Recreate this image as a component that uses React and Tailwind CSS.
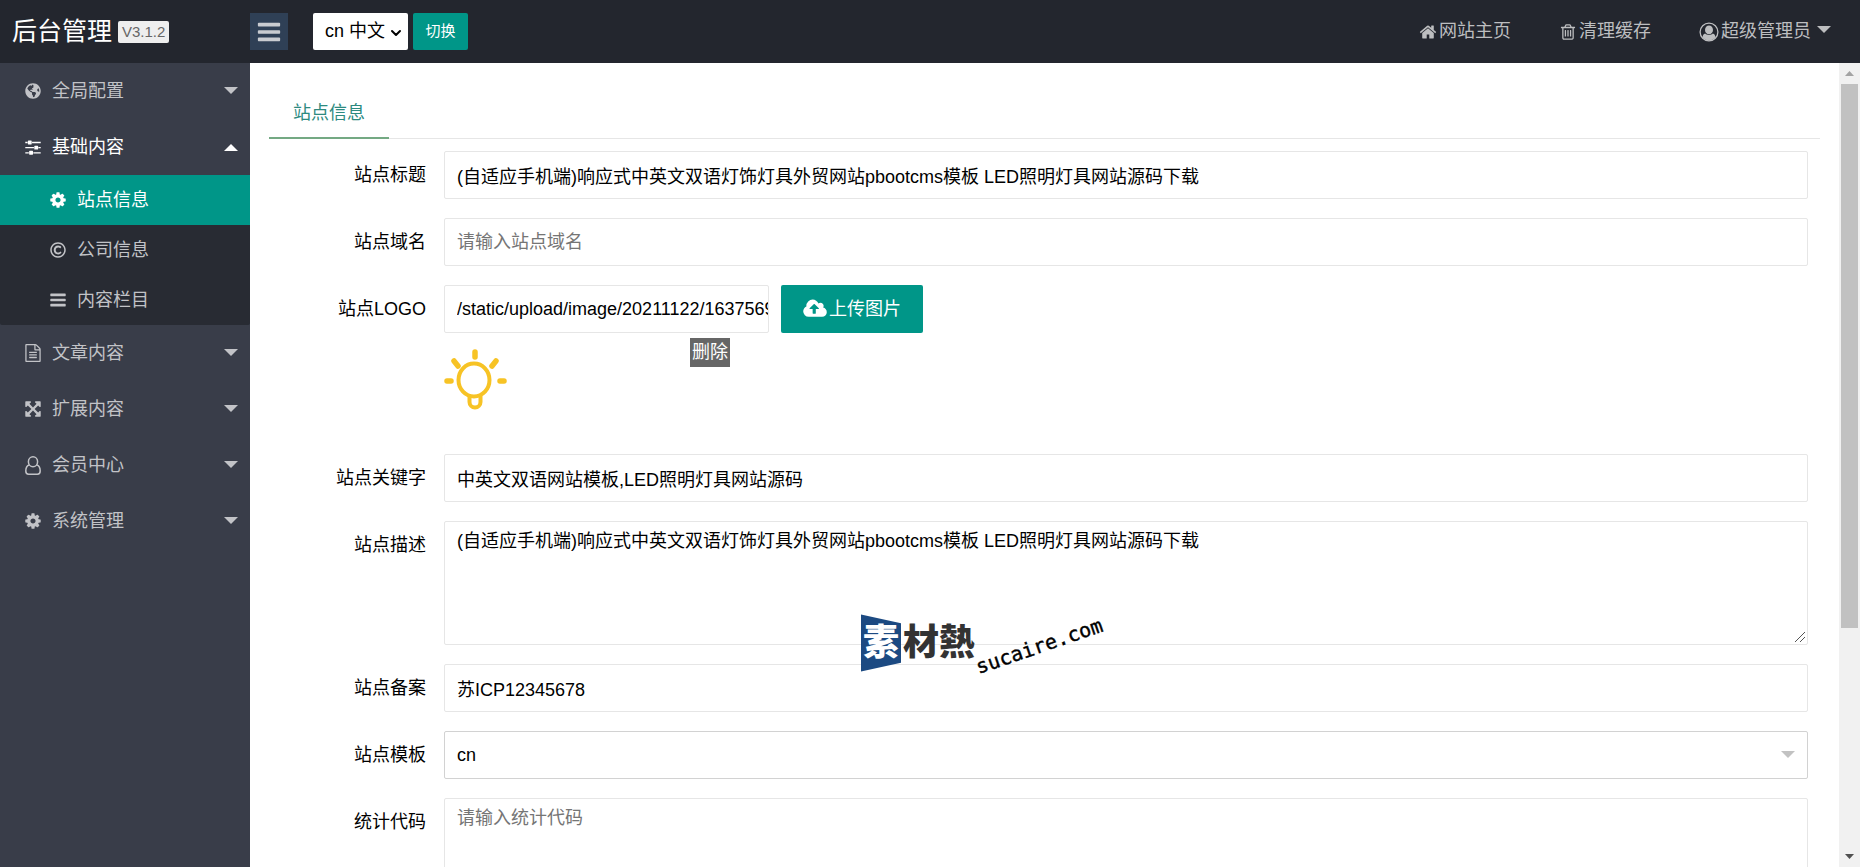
import React, { useState } from 'react';
import { FaGlobeAmericas, FaRegCopyright } from 'react-icons/fa';
import { ChevronDown } from 'lucide-react';

const paths = {
  home: 'M1472 992v480q0 26-19 45t-45 19h-384v-384h-256v384h-384q-26 0-45-19t-19-45v-480q0-1 .5-3t.5-3l575-474 575 474q1 2 1 6zm223-69l-62 74q-8 9-21 11h-3q-13 0-21-7l-692-577-692 577q-12 8-24 7-13-2-21-11l-62-74q-8-10-7-23.5t11-21.5l719-599q32-26 76-26t76 26l244 204v-195q0-14 9-23t23-9h192q14 0 23 9t9 23v408l219 182q10 8 11 21.5t-7 23.5z',
  trash: 'M704 736v576q0 14-9 23t-23 9h-64q-14 0-23-9t-9-23v-576q0-14 9-23t23-9h64q14 0 23 9t9 23zm256 0v576q0 14-9 23t-23 9h-64q-14 0-23-9t-9-23v-576q0-14 9-23t23-9h64q14 0 23 9t9 23zm256 0v576q0 14-9 23t-23 9h-64q-14 0-23-9t-9-23v-576q0-14 9-23t23-9h64q14 0 23 9t9 23zm128 724v-948h-896v948q0 22 7 40.5t14.5 27 10.5 8.5h832q3 0 10.5-8.5t14.5-27 7-40.5zm-672-1076h448l-48-117q-7-9-17-11h-317q-10 2-17 11zm928 32v64q0 14-9 23t-23 9h-96v948q0 83-47 143.5t-113 60.5h-832q-66 0-113-58.5t-47-141.5v-952h-96q-14 0-23-9t-9-23v-64q0-14 9-23t23-9h309l70-167q15-37 54-63t79-26h320q40 0 79 26t54 63l70 167h309q14 0 23 9t9 23z',
  gear: 'M1152 896q0-106-75-181t-181-75-181 75-75 181 75 181 181 75 181-75 75-181zm512-109v222q0 12-8 23t-20 13l-185 28q-19 54-39 91 35 50 107 138 10 12 10 25t-9 23q-27 37-99 108t-94 71q-12 0-26-9l-138-108q-44 23-91 38-16 136-29 186-7 28-36 28h-222q-14 0-24.5-8.5t-11.5-21.5l-28-184q-49-16-90-37l-141 107q-10 9-25 9-14 0-25-11-126-114-165-168-7-10-7-23 0-12 8-23 15-21 51-66.5t54-70.5q-27-50-41-99l-183-27q-13-2-21-12.5t-8-23.5v-222q0-12 8-23t19-13l186-28q14-46 39-92-40-57-107-138-10-12-10-24 0-10 9-23 26-36 98.5-107.5t94.5-71.5q13 0 26 10l138 107q44-23 91-38 16-136 29-186 7-28 36-28h222q14 0 24.5 8.5t11.5 21.5l28 184q49 16 90 37l142-107q9-9 24-9 13 0 25 10 129 119 165 170 7 8 7 22 0 12-8 23-15 21-51 66.5t-54 70.5q26 50 41 98l183 28q13 2 21 12.5t8 23.5z',
  bars: 'M1664 1344v128q0 26-19 45t-45 19h-1408q-26 0-45-19t-19-45v-128q0-26 19-45t45-19h1408q26 0 45 19t19 45zm0-512v128q0 26-19 45t-45 19h-1408q-26 0-45-19t-19-45v-128q0-26 19-45t45-19h1408q26 0 45 19t19 45zm0-512v128q0 26-19 45t-45 19h-1408q-26 0-45-19t-19-45v-128q0-26 19-45t45-19h1408q26 0 45 19t19 45z',
  sliders: 'M480 1408v128h-352v-128h352zm352-128q26 0 45 19t19 45v256q0 26-19 45t-45 19h-256q-26 0-45-19t-19-45v-256q0-26 19-45t45-19h256zm160-384v128h-864v-128h864zm-640-512v128h-224v-128h224zm1312 1024v128h-736v-128h736zm-960-1152q26 0 45 19t19 45v256q0 26-19 45t-45 19h-256q-26 0-45-19t-19-45v-256q0-26 19-45t45-19h256zm640 512q26 0 45 19t19 45v256q0 26-19 45t-45 19h-256q-26 0-45-19t-19-45v-256q0-26 19-45t45-19h256zm320 128v128h-224v-128h224zm0-512v128h-864v-128h864z',
  arrows: 'M1411 541l-355 355 355 355 144-144q29-31 70-14 39 17 39 59v448q0 26-19 45t-45 19h-448q-42 0-59-40-17-39 14-69l144-144-355-355-355 355 144 144q31 30 14 69-17 40-59 40h-448q-26 0-45-19t-19-45v-448q0-42 40-59 39-17 69 14l144 144 355-355-355-355-144 144q-19 19-45 19-12 0-24-5-40-17-40-59v-448q0-26 19-45t45-19h448q42 0 59 40 17 39-14 69l-144 144 355 355 355-355-144-144q-31-30-14-69 17-40 59-40h448q26 0 45 19t19 45v448q0 42-39 59-13 5-25 5-26 0-45-19z',
  file: 'M1596 380q28 28 48 76t20 88v1152q0 40-28 68t-68 28h-1344q-40 0-68-28t-28-68v-1600q0-40 28-68t68-28h896q40 0 88 20t76 48zm-444-244v376h376q-10-29-22-41l-313-313q-12-12-41-22zm384 1528v-1024h-416q-40 0-68-28t-28-68v-416h-768v1536h1280zm-1024-864q0-14 9-23t23-9h704q14 0 23 9t9 23v64q0 14-9 23t-23 9h-704q-14 0-23-9t-9-23v-64zm736 224q14 0 23 9t9 23v64q0 14-9 23t-23 9h-704q-14 0-23-9t-9-23v-64q0-14 9-23t23-9h704zm0 256q14 0 23 9t9 23v64q0 14-9 23t-23 9h-704q-14 0-23-9t-9-23v-64q0-14 9-23t23-9h704z',
  upload: 'M1216 864q0-14-9-23l-352-352q-9-9-23-9t-23 9l-351 351q-10 12-10 24 0 14 9 23t23 9h224v352q0 13 9.5 22.5t22.5 9.5h192q13 0 22.5-9.5t9.5-22.5v-352h224q13 0 22.5-9.5t9.5-22.5zm640 288q0 159-112.5 271.5t-271.5 112.5h-1088q-185 0-316.5-131.5t-131.5-316.5q0-130 70-240t188-165q-2-30-2-43 0-212 150-362t362-150q156 0 285.5 87t188.5 231q71-62 166-62 106 0 181 75t75 181q0 76-41 138 130 31 213.5 135.5t83.5 238.5z',
};

const Icon = ({ name, className, viewBox = '0 0 1792 1792' }) => (
  <svg viewBox={viewBox} fill="currentColor" className={className} aria-hidden="true"><path d={paths[name]} /></svg>
);

const UserIcon = () => (
  <svg viewBox="0 0 16 19" className="w-4 h-[19px]" fill="none" stroke="currentColor" strokeWidth="1.5" aria-hidden="true">
    <ellipse cx="8" cy="5.8" rx="4.6" ry="5" />
    <path d="M4.2 9C1.8 9.6.8 12 .8 15c0 2 1.2 3.2 2.8 3.2h8.8c1.6 0 2.8-1.2 2.8-3.2 0-3-1-5.4-3.4-6" />
  </svg>
);

const UserCircle = () => (
  <svg viewBox="0 0 20 20" className="w-5 h-5" aria-hidden="true">
    <circle cx="10" cy="10" r="8.9" fill="none" stroke="currentColor" strokeWidth="1.3" />
    <path d="M6.2 11.6C4.4 12 3.8 13.6 3.5 15.3a8.3 8.3 0 0 0 13 0C16.2 13.6 15.6 12 13.8 11.6 12.8 12.6 11.5 13 10 13s-2.8-.4-3.8-1.4z" fill="currentColor" />
    <ellipse cx="10" cy="7.9" rx="4" ry="4.3" fill="currentColor" />
  </svg>
);

const Caret = ({ up, className = '' }) => (
  <svg viewBox="0 0 14 7" className={`w-[14px] h-[7px] ${className}`} fill="currentColor" aria-hidden="true">
    <path d={up ? 'M0 7L7 0l7 7z' : 'M0 0h14L7 7z'} />
  </svg>
);

const menus = [
  { label: '全局配置', icon: <FaGlobeAmericas className="w-4 h-4" /> },
  {
    label: '基础内容',
    icon: <Icon name="sliders" className="w-[18px] h-[18px]" />,
    children: [
      { label: '站点信息', icon: <Icon name="gear" className="w-[18px] h-[18px]" /> },
      { label: '公司信息', icon: <FaRegCopyright className="w-4 h-4" /> },
      { label: '内容栏目', icon: <Icon name="bars" className="w-[18px] h-[18px]" /> },
    ],
  },
  { label: '文章内容', icon: <Icon name="file" className="w-[18px] h-[18px]" /> },
  { label: '扩展内容', icon: <Icon name="arrows" className="w-[18px] h-[18px]" /> },
  { label: '会员中心', icon: <UserIcon /> },
  { label: '系统管理', icon: <Icon name="gear" className="w-[18px] h-[18px]" /> },
];

const inputClass = 'block w-full h-12 pl-3 border border-[#e6e6e6] rounded-xs bg-white placeholder:text-[#757575] focus:outline-none';
const areaClass = 'block w-full h-[124px] pl-3 pt-[7px] leading-6 border border-[#e6e6e6] rounded-xs bg-white placeholder:text-[#757575] focus:outline-none resize-y [&::-webkit-resizer]:hidden';

const Row = ({ id, label, children }) => (
  <div className="flex">
    <label htmlFor={id} className="w-[175px] shrink-0 pr-[18px] text-right leading-[48px]">{label}</label>
    <div className="flex-1 min-w-0">{children}</div>
  </div>
);

const TextArea = (props) => (
  <div className="relative">
    <textarea className={areaClass} {...props} />
    <svg viewBox="0 0 10 10" className="absolute right-[3px] bottom-[3px] w-[10px] h-[10px] pointer-events-none" stroke="#555" fill="none" aria-hidden="true">
      <path d="M0 10L10 0M5 10l5-5" />
    </svg>
  </div>
);

const Header = ({ onToggle }) => (
  <header className="h-[63px] shrink-0 flex items-center bg-[#23262e] text-[#bdbec0]">
    <div className="w-[250px] pl-3 flex items-center gap-[6px]">
      <h1 className="text-[25px] text-white whitespace-nowrap">后台管理</h1>
      <span className="px-1 h-[22px] leading-[22px] rounded-xs bg-[#eee] text-[#666] text-[15px]">V3.1.2</span>
    </div>
    <button type="button" onClick={onToggle} aria-label="菜单" className="w-[38px] h-[37px] flex items-center justify-center bg-[#2f4056] text-[#c9ccd1]">
      <Icon name="bars" className="w-[26px] h-[26px]" />
    </button>
    <div className="relative ml-[25px]">
      <select aria-label="语言" className="appearance-none block w-[95px] h-[37px] pl-3 rounded-xs bg-white text-black">
        <option>cn 中文</option>
      </select>
      <ChevronDown className="absolute right-1 top-3 w-4 h-4 text-black pointer-events-none" strokeWidth={3} />
    </div>
    <button type="button" className="ml-[5px] w-[55px] h-[37px] rounded-xs bg-[#009688] text-white text-[15px]">切换</button>

    <nav className="ml-auto pr-[29px] flex items-center gap-12">
      <a href="#home" className="flex items-center gap-[2px]"><Icon name="home" className="w-[18px] h-[18px]" />网站主页</a>
      <a href="#cache" className="flex items-center gap-[2px]"><Icon name="trash" className="w-[18px] h-[18px]" />清理缓存</a>
      <a href="#user" className="flex items-center gap-[2px]"><UserCircle />超级管理员<Caret className="ml-1 mb-1" /></a>
    </nav>
  </header>
);

const Sidebar = () => {
  const [openMenu, setOpenMenu] = useState('基础内容');
  const [current, setCurrent] = useState('站点信息');

  return (
    <aside className="w-[250px] shrink-0 bg-[#393d49] text-[#c2c3c7]">
      {menus.map(menu => {
        const open = openMenu === menu.label;
        return (
          <div key={menu.label}>
            <button type="button" onClick={() => setOpenMenu(open ? '' : menu.label)} className={`w-full h-14 pl-6 pr-3 flex items-center ${open ? 'text-white' : ''}`}>
              <span className="w-[18px] flex justify-center">{menu.icon}</span>
              <span className="ml-[10px]">{menu.label}</span>
              <Caret up={open} className={`ml-auto ${open ? '' : 'mb-[2px]'}`} />
            </button>
            {open && menu.children && (
              <div className="bg-[#282b33] rounded-xs">
                {menu.children.map(item => (
                  <a key={item.label} href="#menu" onClick={() => setCurrent(item.label)} className={`h-[50px] pl-[49px] flex items-center ${current === item.label ? 'bg-[#009688] text-white' : ''}`}>
                    <span className="w-[18px] flex justify-center">{item.icon}</span>
                    <span className="ml-[10px]">{item.label}</span>
                  </a>
                ))}
              </div>
            )}
          </div>
        );
      })}
    </aside>
  );
};

const Bulb = () => (
  <svg viewBox="0 0 63 61" className="w-[63px] h-[61px]" fill="none" stroke="#f7c325" strokeLinecap="round" aria-label="LOGO">
    <ellipse cx="30" cy="31" rx="15.5" ry="16.5" strokeWidth="4" />
    <path d="M25.5 47v6a5.5 5.5 0 0 0 11 0v-6" strokeWidth="4" />
    <path d="M31 3v5M3 32h4M56 32h4M10 12l4 5M52 12l-4 5" strokeWidth="5.5" />
  </svg>
);

const Watermark = () => (
  <div className="absolute left-[861px] top-[612px] flex pointer-events-none font-black text-[36px] leading-[62px] text-[#333]" aria-hidden="true">
    <span className="w-10 text-center text-white bg-[#1c4a82] [clip-path:polygon(0_4%,100%_18%,100%_82%,0_96%)]">素</span>
    <span className="ml-[2px]">材熱</span>
    <span className="w-[132px] h-6 -ml-[2px] mt-[22px] -rotate-19 font-['DejaVu_Sans_Mono',monospace] font-normal text-[20px] leading-6 text-black [-webkit-text-stroke:0.4px_black]">sucaire.com</span>
  </div>
);

const App = () => {
  const [collapsed, setCollapsed] = useState(false);

  return (
    <div className="relative h-screen flex flex-col overflow-hidden bg-white text-black text-[18px] font-normal font-['Liberation_Sans','Noto_Sans_CJK_SC',sans-serif]">
      <Header onToggle={() => setCollapsed(!collapsed)} />
      <div className="flex-1 min-h-0 flex">
        {!collapsed && <Sidebar />}
        <main className="flex-1 min-w-0 overflow-hidden pt-6 px-[19px]">
          <div className="h-[52px] flex border-b border-[#e6e6e6]">
            <a href="#site" className="h-[52px] px-6 leading-[52px] border-b-2 border-[#74a983] text-[#2d8a80]">站点信息</a>
          </div>

          <form className="mt-3 pr-3 flex flex-col gap-[19px]" onSubmit={e => e.preventDefault()}>
            <Row id="title" label="站点标题">
              <input id="title" type="text" className={inputClass} defaultValue="(自适应手机端)响应式中英文双语灯饰灯具外贸网站pbootcms模板 LED照明灯具网站源码下载" />
            </Row>
            <Row id="domain" label="站点域名">
              <input id="domain" type="text" className={inputClass} placeholder="请输入站点域名" />
            </Row>
            <Row id="logo" label="站点LOGO">
              <div className="flex gap-3">
                <div className="w-[325px]">
                  <input id="logo" type="text" className={inputClass} defaultValue="/static/upload/image/20211122/1637569350.png" />
                </div>
                <button type="button" className="w-[142px] h-12 flex items-center justify-center gap-[2px] rounded-xs bg-[#009688] text-white">
                  <Icon name="upload" viewBox="-64 0 1920 1792" className="w-6 h-[22px]" />上传图片
                </button>
              </div>
              <div className="h-[102px] pt-[5px] flex">
                <div className="pt-[11px] w-[246px]"><Bulb /></div>
                <button type="button" className="h-[29px] w-10 bg-[#666] text-white">删除</button>
              </div>
            </Row>
            <Row id="keywords" label="站点关键字">
              <input id="keywords" type="text" className={inputClass} defaultValue="中英文双语网站模板,LED照明灯具网站源码" />
            </Row>
            <Row id="description" label="站点描述">
              <TextArea id="description" defaultValue="(自适应手机端)响应式中英文双语灯饰灯具外贸网站pbootcms模板 LED照明灯具网站源码下载" />
            </Row>
            <Row id="icp" label="站点备案">
              <input id="icp" type="text" className={inputClass} defaultValue="苏ICP12345678" />
            </Row>
            <Row id="theme" label="站点模板">
              <div className="relative">
                <select id="theme" className="appearance-none block w-full h-12 pl-3 border border-[#d2d2d2] rounded-xs bg-white focus:outline-none">
                  <option>cn</option>
                </select>
                <Caret className="absolute right-[13px] top-5 text-[#c2c2c2] pointer-events-none" />
              </div>
            </Row>
            <Row id="statistical" label="统计代码">
              <TextArea id="statistical" placeholder="请输入统计代码" />
            </Row>
          </form>
        </main>

        {/* scroll bar */}
        <div className="w-[21px] shrink-0 flex flex-col items-center bg-[#f1f1f1]">
          <div className="h-[21px] flex items-center"><svg viewBox="0 0 9 5" className="w-[9px] h-[5px]" fill="#a3a3a3" aria-hidden="true"><path d="M0 5l4.5-5L9 5z" /></svg></div>
          <div className="flex-1 w-full px-[2px]"><div className="h-5/7 bg-[#c1c1c1]" /></div>
          <div className="h-[21px] flex items-center"><svg viewBox="0 0 9 5" className="w-[9px] h-[5px]" fill="#505050" aria-hidden="true"><path d="M0 0h9L4.5 5z" /></svg></div>
        </div>
      </div>
      <Watermark />
    </div>
  );
};
export default App;
